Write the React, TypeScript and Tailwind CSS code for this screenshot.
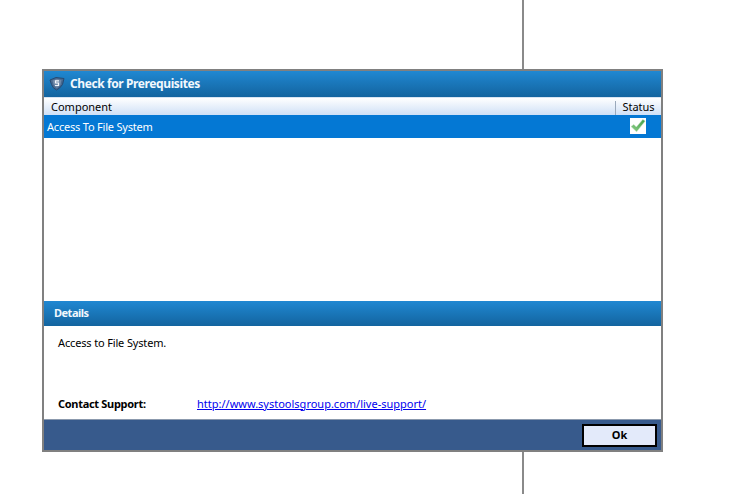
import React from "react";

function Shield() {
  return (
    <svg width="16" height="16" viewBox="0 0 16 16" className="shrink-0">
      <path d="M1 4 L7 1.5 L15 2.5 L13.5 8.5 Q11 12.5 7.5 14 Q3.5 12 2.5 8.5 Z" fill="#47688f" stroke="#274a73" strokeWidth="1" />
      <path d="M3.5 4.5 L8 3 L12.5 4 L11.5 8.5 Q9.5 11 7.8 12 Q5.5 10.5 4.5 8.5 Z" fill="#6f88a8" />
      <path d="M10 4.8 H6.5 V7 H9.5 V9.5 H6" fill="none" stroke="#f2f6fb" strokeWidth="1.2" />
    </svg>
  );
}

function Check() {
  return (
    <div className="w-4 h-4 bg-white flex items-center justify-center">
      <svg width="16" height="16" viewBox="0 0 16 16">
        <defs>
          <linearGradient id="chk" x1="0" y1="1" x2="1" y2="0">
            <stop offset="0" stopColor="#8fcf8a" />
            <stop offset="1" stopColor="#3f9f45" />
          </linearGradient>
        </defs>
        <path d="M1 8.5 L3.8 6.5 L6.3 9 L12.8 1.5 L15.2 3 L6.6 13.8 Z" fill="url(#chk)" stroke="#c5dfc5" strokeWidth="0.5" />
      </svg>
    </div>
  );
}

export default function App() {
  return (
    <div className="relative w-[739px] h-[494px] bg-white overflow-hidden pt-[69px] pl-[42px] font-['Noto_Sans','DejaVu_Sans',sans-serif] text-[11px] text-black">
      <div className="absolute left-[522px] top-0 w-[1.5px] h-full bg-[#8a8a8a]" />
      <div className="relative w-[621px] h-[383px] border-2 border-[#808080] bg-white flex flex-col">
        <div className="h-[26px] shrink-0 flex items-center pl-[5px] gap-[5px] bg-gradient-to-b from-[#2088d2] to-[#13649f]">
          <Shield />
          <span className="text-[#f2f8fd] font-bold text-[12px] tracking-[-0.4px]">Check for Prerequisites</span>
        </div>
        <div className="h-[18px] shrink-0 flex items-center pt-[2px] bg-gradient-to-b from-[#ffffff] to-[#cfe0f6] border-t border-[#d8e4f2]">
          <span className="pl-[7px] flex-1">Component</span>
          <span className="w-[46px] h-[14px] border-l border-[#9aa9bb] flex items-center justify-center">Status</span>
        </div>
        <div className="h-[23px] shrink-0 flex items-center bg-[#0478d4] text-white">
          <span className="pl-[3px] pt-[2px] flex-1 tracking-[-0.2px]">Access To File System</span>
          <div className="w-[46px] flex justify-center pr-[1px] pb-[2px]">
            <Check />
          </div>
        </div>
        <div className="h-[163px] shrink-0 bg-white" />
        <div className="h-[25px] shrink-0 flex items-center pl-[10px] bg-gradient-to-b from-[#2088d2] to-[#13649f] text-[#f2f8fd] font-bold tracking-[-0.5px]">
          Details
        </div>
        <div className="flex-1 flex flex-col justify-between pl-[14px] pt-[9px] pb-[7px] bg-white">
          <div className="tracking-[-0.15px]">Access to File System.</div>
          <div className="flex items-center">
            <span className="font-bold w-[139px] tracking-[-0.3px]">Contact Support:</span>
            <a className="text-[#0000ee] underline">http://www.systoolsgroup.com/live-support/</a>
          </div>
        </div>
        <div className="h-[31px] shrink-0 bg-[#375a8c] border-t border-[#8b99ad] flex items-center justify-end pr-[4px]">
          <button className="w-[75px] h-[23px] border-2 border-black bg-[#e3eafa] font-bold">Ok</button>
        </div>
      </div>
    </div>
  );
}
